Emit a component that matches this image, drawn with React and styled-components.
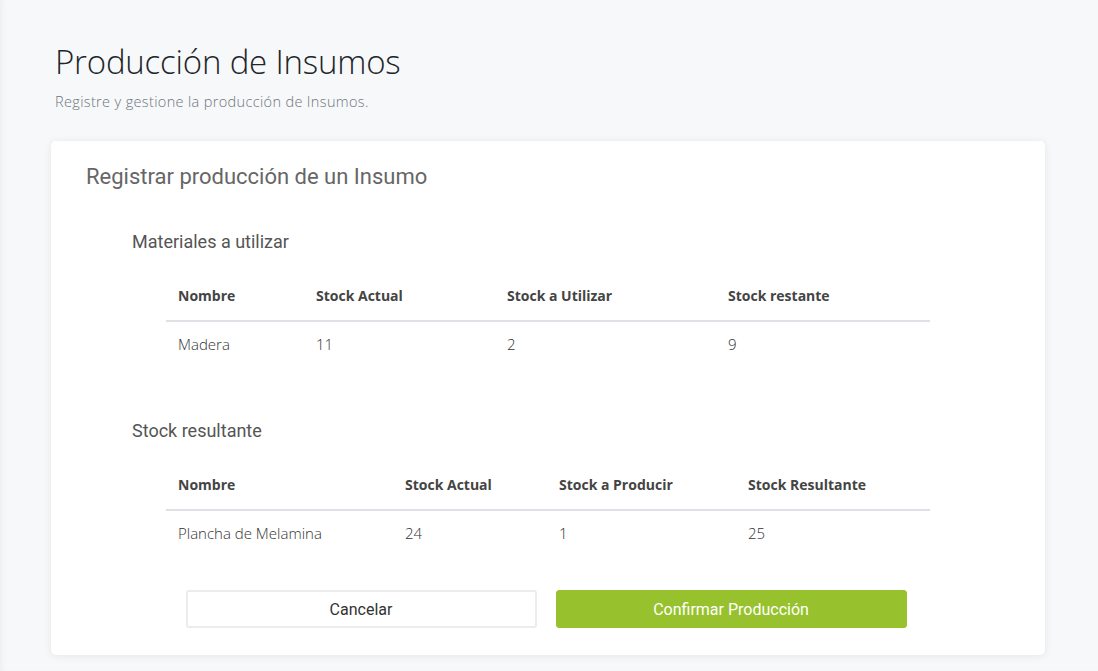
import React from 'react';
import styled, { createGlobalStyle } from 'styled-components';

const GlobalStyle = createGlobalStyle`
  html, body {
    margin: 0;
    padding: 0;
    background: #f7f8fa;
  }
  body {
    font-family: "Open Sans", "Liberation Sans", sans-serif;
    color: #212529;
  }
  * { box-sizing: border-box; }
`;

const Page = styled.div`
  min-height: 100vh;
  padding: 41px 53px 16px 51px;
  box-shadow: inset 5px 0 6px -4px rgba(0, 0, 0, 0.06);
`;

const Header = styled.header`
  padding-left: 4px;
  margin-bottom: 29px;
`;

const Title = styled.h1`
  margin: 0;
  font-size: 33px;
  line-height: 41px;
  font-weight: 300;
  color: #212529;
  letter-spacing: -0.2px;
`;

const Subtitle = styled.p`
  margin: 9px 0 0;
  font-size: 14.5px;
  line-height: 21px;
  font-weight: 300;
  letter-spacing: 0.35px;
  color: #6c757d;
`;

const Card = styled.section`
  background: #fff;
  border-radius: 5px;
  box-shadow: 0 1px 8px rgba(0, 0, 0, 0.08);
  padding: 23px 35px 27px;
`;

const CardTitle = styled.h2`
  margin: 0;
  font-family: Roboto, "Liberation Sans", sans-serif;
  font-size: 22px;
  line-height: 26px;
  font-weight: 400;
  color: #666;
`;

const Block = styled.div`
  padding-left: 46px;
  margin-top: ${({ $top }) => $top}px;
`;

const BlockTitle = styled.h3`
  margin: 0 0 18px;
  font-family: Roboto, "Liberation Sans", sans-serif;
  font-size: 18px;
  line-height: 22px;
  font-weight: 400;
  color: #555;
`;

const Table = styled.table`
  margin: 0 0 0 34px;
  width: 764px;
  border-collapse: collapse;
  table-layout: fixed;
`;

const Th = styled.th`
  text-align: left;
  padding: 14px 12px;
  font-size: 14px;
  line-height: 21px;
  font-weight: 700;
  color: #444;
  border-bottom: 2px solid #dee2e6;
`;

const Td = styled.td`
  padding: 12px 12px 13px;
  font-size: 15px;
  line-height: 21px;
  font-weight: 300;
  color: #333;
`;

const Actions = styled.div`
  display: flex;
  justify-content: center;
  gap: 19px;
  margin-top: 33px;
  padding-right: 4px;
`;

const Button = styled.button`
  width: 351px;
  height: 38px;
  border-radius: 3px;
  font-family: Roboto, "Liberation Sans", sans-serif;
  font-size: 16px;
  cursor: pointer;
  border: ${({ $primary }) => ($primary ? '1px solid #97c22d' : '2px solid #ececec')};
  background: ${({ $primary }) => ($primary ? '#97c22d' : '#fff')};
  color: ${({ $primary }) => ($primary ? '#fff' : '#333')};
`;

const materiales = {
  cols: [
    { label: 'Nombre', w: 138 },
    { label: 'Stock Actual', w: 191 },
    { label: 'Stock a Utilizar', w: 221 },
    { label: 'Stock restante', w: 214 }
  ],
  rows: [['Madera', '11', '2', '9']]
};

const resultante = {
  cols: [
    { label: 'Nombre', w: 227 },
    { label: 'Stock Actual', w: 154 },
    { label: 'Stock a Producir', w: 189 },
    { label: 'Stock Resultante', w: 194 }
  ],
  rows: [['Plancha de Melamina', '24', '1', '25']]
};

const DataTable = ({ data }) => (
  <Table>
    <colgroup>
      {data.cols.map((c) => (
        <col key={c.label} style={{ width: c.w }} />
      ))}
    </colgroup>
    <thead>
      <tr>
        {data.cols.map((c) => (
          <Th key={c.label}>{c.label}</Th>
        ))}
      </tr>
    </thead>
    <tbody>
      {data.rows.map((r, i) => (
        <tr key={i}>
          {r.map((v, j) => (
            <Td key={j}>{v}</Td>
          ))}
        </tr>
      ))}
    </tbody>
  </Table>
);

const App = () => (
  <>
    <GlobalStyle />
    <Page>
      <Header>
        <Title>Producción de Insumos</Title>
        <Subtitle>Registre y gestione la producción de Insumos.</Subtitle>
      </Header>
      <Card>
        <CardTitle>Registrar producción de un Insumo</CardTitle>
        <Block $top={41}>
          <BlockTitle>Materiales a utilizar</BlockTitle>
          <DataTable data={materiales} />
        </Block>
        <Block $top={52}>
          <BlockTitle>Stock resultante</BlockTitle>
          <DataTable data={resultante} />
        </Block>
        <Actions>
          <Button>Cancelar</Button>
          <Button $primary>Confirmar Producción</Button>
        </Actions>
      </Card>
    </Page>
  </>
);

export default App;
